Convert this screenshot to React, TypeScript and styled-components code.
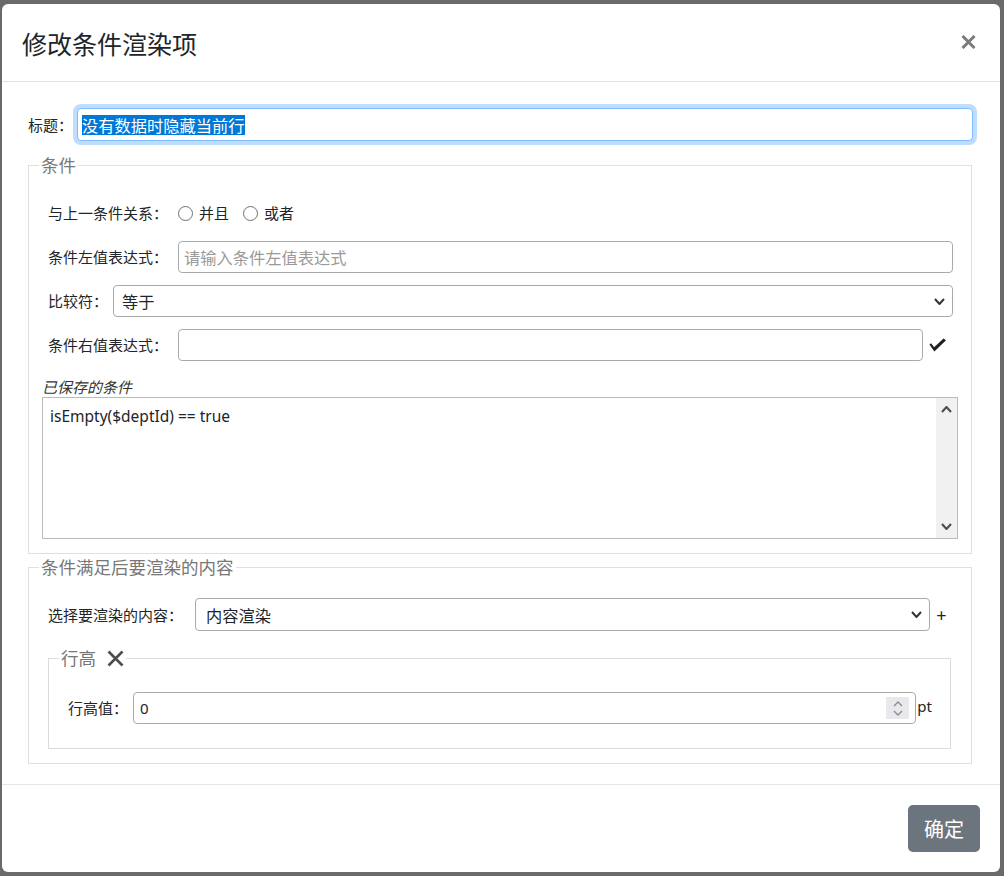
import React from 'react';
import styled, { createGlobalStyle } from 'styled-components';

const GlobalStyle = createGlobalStyle`
  html, body {
    margin: 0;
    padding: 0;
    background: #6a6a6a;
  }

  body {
    font-family: "Noto Sans", "Noto Sans CJK SC", sans-serif;
    color: #212529;
  }

  * {
    box-sizing: border-box;
  }
`;

const CJK = `"Noto Sans CJK SC", sans-serif`;

const Backdrop = styled.div`
  width: 1004px;
  height: 876px;
  padding: 4px 4px 0 2px;
  background: #6a6a6a;
  overflow: hidden;
`;

const Dialog = styled.div`
  width: 998px;
  background: #fff;
  border-radius: 6px;
  display: flex;
  flex-direction: column;
`;

const Header = styled.div`
  height: 78px;
  padding: 0 24px 0 20px;
  border-bottom: 1px solid #dee2e6;
  display: flex;
  align-items: center;
  justify-content: space-between;
`;

const Title = styled.h5`
  margin: 0;
  font-family: ${CJK};
  font-size: 25px;
  font-weight: 400;
  line-height: 30px;
  color: #212529;
`;

const CloseButton = styled.button`
  border: 0;
  padding: 0;
  background: none;
  display: flex;
  margin-top: -2px;
  cursor: pointer;
`;

const Body = styled.div`
  padding: 26px 28px 20px 26px;
  display: flex;
  flex-direction: column;
`;

const TitleRow = styled.div`
  display: flex;
  align-items: center;
  height: 33px;
  margin-right: -1px;
`;

const Label = styled.span<{ $gap?: number }>`
  font-family: ${CJK};
  font-size: 15px;
  line-height: 20px;
  white-space: nowrap;
  color: #212529;
  margin-right: ${({ $gap }) => $gap ?? 5}px;
`;

const Field = styled.div<{ $focus?: boolean; $height?: number }>`
  flex: 1;
  min-width: 0;
  height: ${({ $height }) => $height ?? 32}px;
  display: flex;
  align-items: center;
  padding: 0 4px 0 5px;
  border: 1px solid ${({ $focus }) => ($focus ? '#80bdff' : '#aaa')};
  border-radius: 4px;
  background: #fff;
  font-family: ${CJK};
  font-size: 16.25px;
  line-height: 20px;
  color: #212529;
  box-shadow: ${({ $focus }) => ($focus ? '0 0 0 4px rgba(0, 123, 255, 0.25)' : 'none')};
`;

const Selected = styled.span`
  margin-left: -1px;
  background: #0078d7;
  color: #fff;
`;

const Placeholder = styled.span`
  color: #9a9a9a;
`;

const Value = styled.span<{ $indent?: number }>`
  flex: 1;
  padding-left: ${({ $indent }) => $indent ?? 0}px;
  white-space: nowrap;
`;

const NumberValue = styled(Value)`
  font-family: "Noto Sans", sans-serif;
  font-size: 15px;
`;

const Group = styled.fieldset<{ $inner?: boolean }>`
  min-width: 0;
  margin: ${({ $inner }) => ($inner ? '16px 7px 0 6px' : '13px 0 0')};
  padding: 0 13px ${({ $inner }) => ($inner ? 24 : 14)}px;
  border: 1px solid ${({ $inner }) => ($inner ? '#dcdcdc' : '#e0e0e0')};
`;

const GroupTitle = styled.legend`
  margin-left: -3px;
  padding: 0 2px;
  font-family: ${CJK};
  font-size: 17.5px;
  line-height: 22px;
  color: #777;
`;

const RemoveIcon = styled.svg`
  margin-left: 11px;
  vertical-align: -2px;
`;

const Rows = styled.div<{ $top: number }>`
  padding-top: ${({ $top }) => $top}px;
  display: flex;
  flex-direction: column;
  gap: 12px;
`;

const FormRow = styled.div<{ $height?: number }>`
  height: ${({ $height }) => $height ?? 32}px;
  display: flex;
  align-items: center;
  padding: 0 5px 0 6px;
`;

const Radio = styled.span`
  width: 15px;
  height: 15px;
  margin: 0 6px 0 5px;
  border: 1px solid #707070;
  border-radius: 50%;
  background: #fff;
`;

const RadioText = styled.span`
  font-family: ${CJK};
  font-size: 15px;
  line-height: 20px;
  margin-right: 9px;
`;

const CheckMark = styled.svg`
  margin: 0 7px 0 6px;
  flex-shrink: 0;
`;

const SavedCaption = styled.div`
  margin-top: 16px;
  font-family: ${CJK};
  font-size: 15px;
  line-height: 20px;
  font-style: italic;
  color: #333;
`;

const SavedList = styled.div`
  height: 142px;
  display: flex;
  border: 1px solid #bbb;
`;

const SavedText = styled.div`
  flex: 1;
  padding: 8px 7px;
  font-family: "Noto Sans", sans-serif;
  font-size: 15.5px;
  line-height: 20px;
  color: #212529;
`;

const ScrollTrack = styled.div`
  width: 21px;
  background: #f1f1f1;
  display: flex;
  flex-direction: column;
  align-items: center;
  justify-content: space-between;
  padding: 8px 0;
`;

const Plus = styled.span`
  width: 23px;
  text-align: center;
  font-family: "Noto Sans", sans-serif;
  font-size: 18px;
  font-weight: 400;
  line-height: 20px;
  color: #212529;
`;

const Spinner = styled.span`
  width: 23px;
  height: 22px;
  margin-right: 2px;
  background: #e9e9ed;
  display: flex;
  flex-direction: column;
  align-items: center;
  justify-content: center;
  gap: 3px;
`;

const Unit = styled.span`
  margin-left: 1px;
  margin-top: -4px;
  font-family: "Noto Sans", sans-serif;
  font-size: 15px;
  line-height: 20px;
`;

const Footer = styled.div`
  border-top: 1px solid #e6e6e6;
  padding: 20px;
  display: flex;
  justify-content: flex-end;
`;

const ConfirmButton = styled.button`
  width: 72px;
  height: 47px;
  border: 0;
  border-radius: 5px;
  background: #6c757d;
  color: #fff;
  font-family: ${CJK};
  font-size: 20px;
  cursor: pointer;
`;

const Chevron: React.FC<{ up?: boolean; color?: string; w?: number; h?: number; sw?: number }> = ({
  up,
  color = '#333',
  w = 11,
  h = 7,
  sw = 2,
}) => (
  <svg width={w} height={h} viewBox={`0 0 ${w} ${h}`}>
    <polyline
      points={up ? `1,${h - 1} ${w / 2},1 ${w - 1},${h - 1}` : `1,1 ${w / 2},${h - 1} ${w - 1},1`}
      fill="none"
      stroke={color}
      strokeWidth={sw}
    />
  </svg>
);

const App: React.FC = () => {
  return (
    <>
      <GlobalStyle />
      <Backdrop>
        <Dialog>
          <Header>
            <Title>修改条件渲染项</Title>
            <CloseButton aria-label="close">
              <svg width="15" height="14" viewBox="0 0 15 14">
                <path d="M1.5 1 L13.5 13 M13.5 1 L1.5 13" stroke="#7b7b7b" strokeWidth="3" />
              </svg>
            </CloseButton>
          </Header>

          <Body>
            <TitleRow>
              <Label $gap={4}>标题：</Label>
              <Field $focus $height={33}>
                <Selected>没有数据时隐藏当前行</Selected>
              </Field>
            </TitleRow>

            <Group>
              <GroupTitle>条件</GroupTitle>
              <Rows $top={21}>
                <FormRow>
                  <Label>与上一条件关系：</Label>
                  <Radio />
                  <RadioText>并且</RadioText>
                  <Radio />
                  <RadioText>或者</RadioText>
                </FormRow>
                <FormRow>
                  <Label $gap={10}>条件左值表达式：</Label>
                  <Field>
                    <Placeholder>请输入条件左值表达式</Placeholder>
                  </Field>
                </FormRow>
                <FormRow>
                  <Label>比较符：</Label>
                  <Field>
                    <Value $indent={3}>等于</Value>
                    <Chevron />
                    <span style={{ width: 3 }} />
                  </Field>
                </FormRow>
                <FormRow>
                  <Label $gap={10}>条件右值表达式：</Label>
                  <Field />
                  <CheckMark width="17" height="14" viewBox="0 0 17 14">
                    <path d="M0.4 6.6 L2.1 5.3 L5.1 9.3 L14.6 0.4 L17 2.2 L5.4 13.4 Z" fill="#1f1f1f" />
                  </CheckMark>
                </FormRow>
              </Rows>
              <SavedCaption>已保存的条件</SavedCaption>
              <SavedList>
                <SavedText>isEmpty($deptId) == true</SavedText>
                <ScrollTrack>
                  <Chevron up color="#505050" w={11} h={7} sw={2.2} />
                  <Chevron color="#505050" w={11} h={7} sw={2.2} />
                </ScrollTrack>
              </SavedList>
            </Group>

            <Group style={{ marginTop: 2 }}>
              <GroupTitle>条件满足后要渲染的内容</GroupTitle>
              <Rows $top={20}>
                <FormRow $height={33}>
                  <Label $gap={12}>选择要渲染的内容：</Label>
                  <Field $height={33}>
                    <Value $indent={5}>内容渲染</Value>
                    <Chevron />
                    <span style={{ width: 3 }} />
                  </Field>
                  <Plus>+</Plus>
                </FormRow>
              </Rows>

              <Group $inner>
                <GroupTitle>
                  行高
                  <RemoveIcon width="17" height="17" viewBox="0 0 17 17">
                    <path d="M1.5 1.5 L15.5 15.5 M15.5 1.5 L1.5 15.5" stroke="#4d4d4d" strokeWidth="2.6" />
                  </RemoveIcon>
                </GroupTitle>
                <Rows $top={23}>
                  <FormRow>
                    <Label>行高值：</Label>
                    <Field>
                      <NumberValue $indent={1}>0</NumberValue>
                      <Spinner>
                        <Chevron up color="#8c8c8c" w={10} h={6} sw={1.4} />
                        <Chevron color="#8c8c8c" w={10} h={6} sw={1.4} />
                      </Spinner>
                    </Field>
                    <Unit>pt</Unit>
                  </FormRow>
                </Rows>
              </Group>
            </Group>
          </Body>

          <Footer>
            <ConfirmButton>确定</ConfirmButton>
          </Footer>
        </Dialog>
      </Backdrop>
    </>
  );
};

export default App;
